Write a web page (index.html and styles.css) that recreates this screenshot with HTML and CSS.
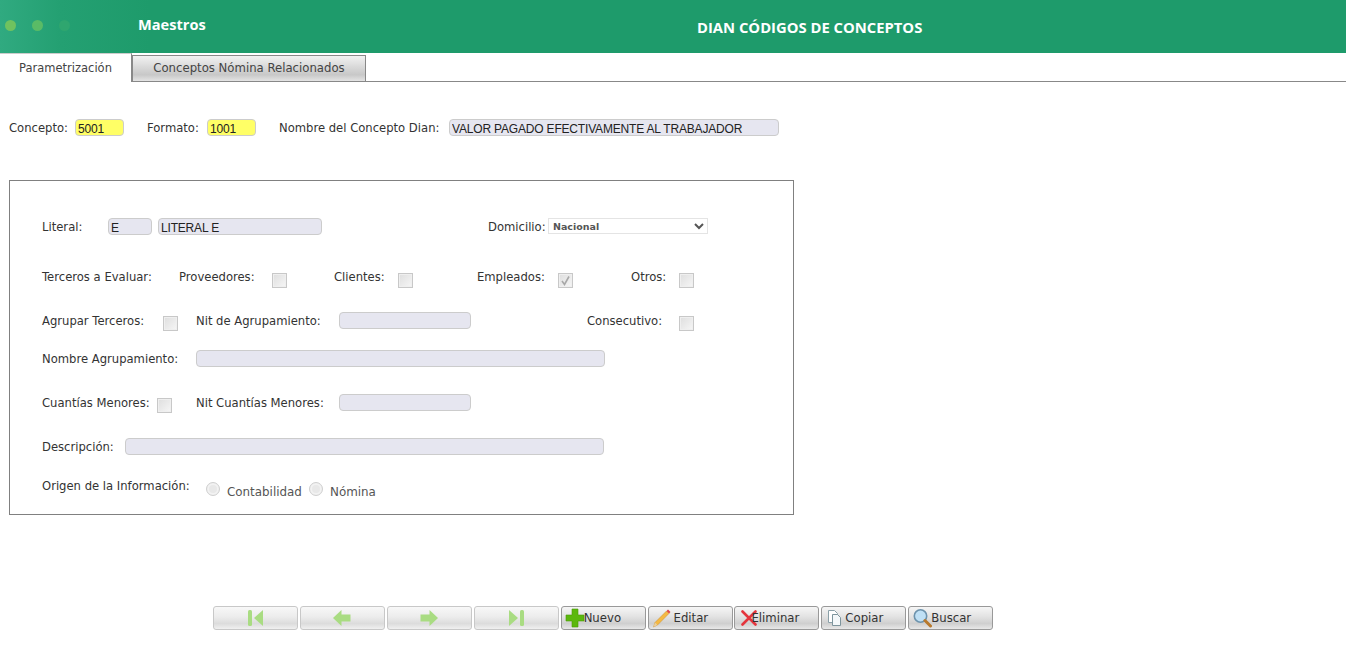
FILE: index.html
```html
<!DOCTYPE html>
<html lang="es">
<head>
<meta charset="utf-8">
<title>DIAN Códigos de Conceptos</title>
<link rel="stylesheet" href="styles.css">
</head>
<body>
<header class="topbar">
  <div class="brand">
    <div class="dots"><i class="dot d1"></i><i class="dot d2"></i><i class="dot d3"></i></div>
    <span class="module">Maestros</span>
  </div>
  <h1 class="title">DIAN CÓDIGOS DE CONCEPTOS</h1>
</header>
<nav class="tabs">
  <a class="tab active">Parametrización</a>
  <a class="tab other">Conceptos Nómina Relacionados</a>
</nav>
<section class="head-row">
  <label class="c66">Concepto:</label><input class="inp yellow w49" value="5001" readonly>
  <label class="ml23 c60">Formato:</label><input class="inp yellow w49" value="1001" readonly>
  <label class="ml23 c170">Nombre del Concepto Dian:</label><input class="inp w330" value="VALOR PAGADO EFECTIVAMENTE AL TRABAJADOR" readonly>
</section>
<section class="box">
  <div class="row r1">
    <label class="x66">Literal:</label><input class="inp w44" value="E" readonly><input class="inp w164 ml6" value="LITERAL E" readonly>
    <label class="ml166 x60">Domicilio:</label>
    <select class="sel" disabled><option>Nacional</option></select>
  </div>
  <div class="row r2">
    <label class="x137">Terceros a Evaluar:</label><label class="x93">Proveedores:</label><span class="chk"></span>
    <label class="ml47 x64">Clientes:</label><span class="chk"></span>
    <label class="ml64 x81">Empleados:</label><span class="chk"><svg viewBox="0 0 15 15" width="15" height="15"><path d="M4 8 6.500 11.500 11 3.500" fill="none" stroke="#a8a8a8" stroke-width="1.600"/></svg></span>
    <label class="ml58 x48">Otros:</label><span class="chk"></span>
  </div>
  <div class="row r3">
    <label class="x121">Agrupar Terceros:</label><span class="chk"></span>
    <label class="ml18 x143">Nit de Agrupamiento:</label><input class="inp w132" readonly>
    <label class="ml116 x92">Consecutivo:</label><span class="chk"></span>
  </div>
  <div class="row r4">
    <label class="x154">Nombre Agrupamiento:</label><input class="inp w409" readonly>
  </div>
  <div class="row r5">
    <label class="x115">Cuantías Menores:</label><span class="chk"></span>
    <label class="ml24 x143">Nit Cuantías Menores:</label><input class="inp w132" readonly>
  </div>
  <div class="row r6">
    <label class="x83">Descripción:</label><input class="inp w479" readonly>
  </div>
  <div class="row r7">
    <label class="x164 origin">Origen de la Información:</label><span class="rad"></span><span class="radlab x82">Contabilidad</span><span class="rad"></span><span class="radlab">Nómina</span>
  </div>
</section>
<footer class="toolbar">
  <button class="btn" disabled><svg width="18" height="18" viewBox="0 0 18 18"><rect x="1" y="1" width="4" height="16" rx="1.500" fill="#a9dc82"/><path d="M7 9 16 1v16z" fill="#a9dc82"/></svg></button>
  <button class="btn" disabled><svg width="20" height="18" viewBox="0 0 20 18"><path d="M1 9 9.500 1v4.500h9v7h-9V17z" fill="#a9dc82"/></svg></button>
  <button class="btn" disabled><svg width="20" height="18" viewBox="0 0 20 18"><path d="M19 9 10.500 1v4.500h-9v7h9V17z" fill="#a9dc82"/></svg></button>
  <button class="btn" disabled><svg width="18" height="18" viewBox="0 0 18 18"><rect x="13" y="1" width="4" height="16" rx="1.500" fill="#a9dc82"/><path d="M11 9 2 1v16z" fill="#a9dc82"/></svg></button>
  <button class="btn lab"><svg class="ic-new" width="20" height="20" viewBox="0 0 20 20"><path d="M7 1h6v6h6v6h-6v6H7v-6H1V7h6z" fill="#5cb80e" stroke="#4a9a08" stroke-width=".6"/></svg>Nuevo</button>
  <button class="btn lab"><svg class="ic-edit" width="20" height="20" viewBox="0 0 20 20"><path d="M1.500 19 3 14.500 14.500 3l2.500 2.500L5.500 17z" fill="#f5b942" stroke="#c98a2a" stroke-width=".5"/><path d="M14.500 3l1.500-1.500 2.500 2.500L17 5.500z" fill="#e04848"/><path d="M1.500 19 3 14.500l2.500 2.500z" fill="#e8cfa0"/></svg>Editar</button>
  <button class="btn lab"><svg class="ic-del" width="16" height="16" viewBox="0 0 16 16"><path d="M1.500 1.500 14.500 14.500M14.500 1.500 1.500 14.500" stroke="#e4353d" stroke-width="2.600" stroke-linecap="round"/></svg>Eliminar</button>
  <button class="btn lab"><svg class="ic-copy" width="18" height="18" viewBox="0 0 18 18"><path d="M2.500 1.500h6l3 3v9h-9z" fill="#fff" stroke="#8aa0a8"/><path d="M6.500 5.500h5l3 3v8h-8z" fill="#f4f8fa" stroke="#7d949c"/></svg>Copiar</button>
  <button class="btn lab"><svg class="ic-find" width="20" height="20" viewBox="0 0 20 20"><circle cx="8.500" cy="8" r="6.200" fill="#bfe0f5" stroke="#6d93ad" stroke-width="1.600"/><path d="m13 12.500 5.500 5.500" stroke="#b8792c" stroke-width="3" stroke-linecap="round"/></svg>Buscar</button>
</footer>
</body>
</html>
```
FILE: styles.css
```css
* { box-sizing: border-box; }
html, body { margin: 0; padding: 0; }
body { background: #fff; color: #333; font: 12px "DejaVu Sans", Verdana, sans-serif; height: 666px; overflow: hidden; }

.topbar { height: 53px; display: flex; background: #1e9b6b; color: #fff; }
.brand { width: 273px; display: flex; background: linear-gradient(90deg, #30aa80 0, #24a072 60px, #1e9b6b 150px); }
.dots { width: 138px; display: flex; gap: 16px; padding: 20px 0 0 5px; }
.dot { width: 11px; height: 11px; border-radius: 50%; }
.d1 { background: #6fc25f; }
.d2 { background: #5abb66; }
.d3 { background: #2fa66f; }
.module { font: 700 14.600px/48px "Open Sans", sans-serif; }
.title { margin: 0; flex: 1; padding: 2px 0 0 424px; font: 700 14.800px/50px "Open Sans", sans-serif; }

.tabs { height: 29px; display: flex; align-items: flex-end; border-bottom: 1px solid #888; }
.tab { font-size: 11.500px; color: #444; text-align: center; }
.active { width: 132px; height: 29px; line-height: 28px; background: #fff; border-top: 1px solid #ccc; border-right: 1px solid #888; margin-bottom: -1px; }
.other { width: 234px; height: 26px; line-height: 25px; font-size: 11.700px; border: 1px solid #888; border-bottom: 0; background: linear-gradient(#f2f2f2, #d8d8d8 45%, #c8c8c8 75%, #e4e4e4); }

.head-row { display: flex; align-items: center; height: 17px; margin: 37px 0 0 9px; }
label, .radlab { display: block; flex: none; font-size: 11.600px; white-space: nowrap; color: #333; }
.c66 { width: 66px; }
.c60 { width: 60px; }
.c170 { width: 170px; }
.ml23 { margin-left: 23px; }
.inp { flex: none; height: 17px; padding: 2px 2px 0; border: 1px solid #ccc; border-radius: 4px; background: #e6e6f0; color: #222; font: 12px/14px "Liberation Sans", Arial, sans-serif; letter-spacing: -.18px; outline: 0; }
.yellow { background: #ffff66; }
.w44 { width: 44px; }
.w49 { width: 49px; }
.w132 { width: 132px; }
.w164 { width: 164px; }
.w330 { width: 330px; }
.w409 { width: 409px; }
.w479 { width: 479px; }
.ml6 { margin-left: 6px; }
.ml18 { margin-left: 18px; }
.ml24 { margin-left: 24px; }
.ml47 { margin-left: 47px; }
.ml58 { margin-left: 58px; }
.ml64 { margin-left: 64px; }
.ml116 { margin-left: 116px; }
.ml166 { margin-left: 166px; }

.box { width: 785px; height: 335px; margin: 44px 0 0 9px; padding: 0 0 0 32px; border: 1px solid #808080; }
.row { display: flex; align-items: center; height: 17px; }
.r1 { margin-top: 37px; }
.r2 { margin-top: 34px; }
.r2 label { margin-top: -2px; }
.r3 { margin-top: 26px; }
.r4 { margin-top: 21px; }
.r5 { margin-top: 27px; }
.r6 { margin-top: 27px; }
.r7 { margin-top: 24px; }
.x48 { width: 48px; }
.x60 { width: 60px; }
.x64 { width: 64px; }
.x66 { width: 66px; }
.x81 { width: 81px; }
.x82 { width: 82px; }
.x83 { width: 83px; }
.x92 { width: 92px; }
.x93 { width: 93px; }
.x115 { width: 115px; }
.x121 { width: 121px; }
.x137 { width: 137px; }
.x143 { width: 143px; }
.x154 { width: 154px; }
.x164 { width: 164px; }
.sel { flex: none; align-self: flex-start; width: 160px; height: 16px; padding: 0; border: 1px solid #e4e4e4; border-radius: 0; background: #fff; color: #555; font: 700 9.500px "DejaVu Sans", sans-serif; opacity: 1; }
.chk { flex: none; display: block; width: 15px; height: 15px; margin-top: 5px; border: 1px solid #c8c8c8; background: linear-gradient(135deg, #dedede, #f6f6f6); box-shadow: inset 0 0 0 1px #efefef; }
.chk svg { display: block; margin: -1px; }
.rad { flex: none; width: 14px; height: 14px; border-radius: 50%; border: 1px solid #d0d0d0; background: #e8e8e8; margin-top: 2px; box-shadow: inset 0 0 0 2px #f2f2f2; }
.origin { margin-top: -4px; }
.radlab { font-size: 11.900px; color: #555; margin: 8px 0 0 7px; }

.toolbar { display: flex; gap: 1.910px; margin: 91px 0 0 213px; }
.btn { flex: none; width: 85px; height: 24px; padding: 0; display: flex; align-items: center; justify-content: center; border: 1px solid #b4b4b4; border-radius: 3px; background: linear-gradient(#f6f6f6, #e2e2e2 45%, #cfcfcf 75%, #e8e8e8); color: #333; font: 11.700px "DejaVu Sans", Verdana, sans-serif; }
.btn[disabled] { border-color: #c8c8c8; background: linear-gradient(#f8f8f8, #ececec 45%, #dcdcdc 75%, #f0f0f0); }
.lab { justify-content: flex-start; padding-left: 3px; border-color: #999; }
.ic-new { margin-right: -1px; }
.ic-edit { margin-right: 2px; }
.ic-del { margin: 0 -6px 0 3px; }
.ic-copy { margin: 0 1px 0 1px; }
.ic-find { margin-right: -1px; }
```
